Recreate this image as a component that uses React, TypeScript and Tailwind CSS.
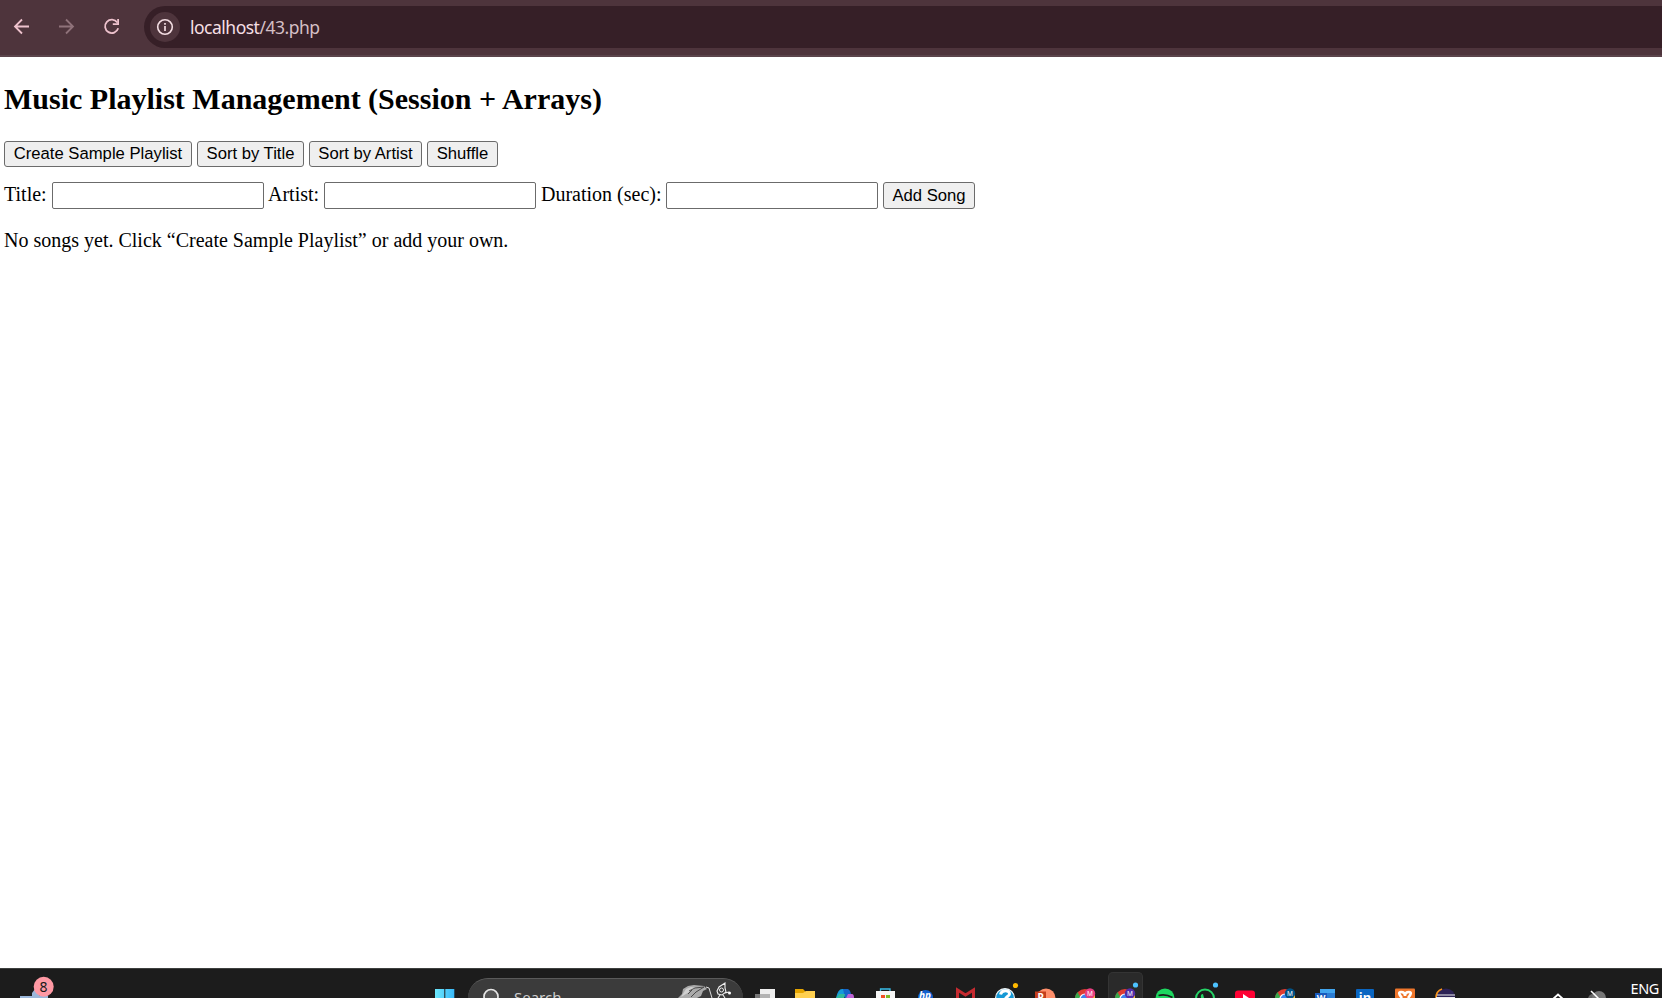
import React from "react";

function NavBar() {
  return (
    <header className="flex h-[57px] w-full shrink-0 items-start border-b-2 border-[#5b444b] bg-[#4e343c] pt-1.5">
      <div className="flex h-[42px] w-[144px] shrink-0 items-center">
        <svg width="144" height="42" viewBox="0 6 144 42" fill="none" strokeWidth="1.8">
          <path d="M29 26.5H15M22 19.5L15 26.5L22 33.5" stroke="#eec2cd" />
          <path d="M59 26.5H73M66 19.5L73 26.5L66 33.5" stroke="#8f727a" />
          <path d="M117.3 22.5A6.7 6.7 0 1 0 118.2 28.3" stroke="#eec2cd" />
          <path d="M118.1 19V24.2H112.8" stroke="#eec2cd" />
        </svg>
      </div>
      <div className="flex h-[42px] flex-1 items-center rounded-l-full bg-[#361f27] pl-1.5">
        <span className="flex size-[30px] items-center justify-center rounded-full bg-[#4e343c]">
          <svg width="18" height="18" viewBox="0 0 18 18" fill="none">
            <circle cx="9" cy="9" r="7.3" stroke="#f3dde2" strokeWidth="1.6" />
            <path d="M9 8V13M9 5V6.7" stroke="#f3dde2" strokeWidth="1.7" />
          </svg>
        </span>
        <span className="ml-[10px] font-['Noto_Sans',sans-serif] text-[17.5px] leading-[24px] tracking-[-0.5px] text-[#f5dfe4]">
          localhost<span className="text-[#d5bfc5]">/43.php</span>
        </span>
      </div>
    </header>
  );
}

function FormButton({ children, className }: { children: React.ReactNode; className: string }) {
  return (
    <button
      className={`shrink-0 whitespace-nowrap rounded-[3px] border border-[#6b6b6b] bg-[#efefef] text-center font-['Liberation_Sans',Arial,sans-serif] text-[16.667px] leading-[22px] text-black ${className}`}
    >
      {children}
    </button>
  );
}

function Field({ label, labelClass }: { label: string; labelClass: string }) {
  return (
    <label className="flex">
      <span className={`shrink-0 whitespace-nowrap leading-[25px] ${labelClass}`}>{label}</span>
      <input className="h-[27px] w-[212px] rounded-[2px] border border-[#6b6b6b] bg-white px-1 text-[16.667px]" />
    </label>
  );
}

function Slot({ children, active }: { children: React.ReactNode; active?: boolean }) {
  return (
    <div
      className={
        active
          ? "h-[26px] w-[35px] shrink-0 rounded-t-[5px] border border-b-0 border-[#343434] bg-[#2a2a2a]"
          : "h-[26px] w-[35px] shrink-0 border border-b-0 border-transparent"
      }
    >
      <svg width="35" height="25" viewBox="0 0 35 25" className="-ml-px block">
        {children}
      </svg>
    </div>
  );
}

function Chrome({ badge }: { badge: string }) {
  return (
    <g>
      <circle cx="17" cy="26" r="10" fill="#df3c32" />
      <path d="M7 26a10 10 0 0 1 2.500-7l4 7z" fill="#38a84d" />
      <path d="M18 20H27V25H18z" fill="#fbc52f" />
      <circle cx="17" cy="26" r="5.6" fill="#fff" />
      <circle cx="17" cy="26" r="4.4" fill="#3f83ee" />
      <circle cx="22" cy="20.500" r="5.2" fill={badge} />
      <text x="22" y="23" textAnchor="middle" fontSize="6.5" fill="#fff" fontFamily="Noto Sans, sans-serif">
        M
      </text>
    </g>
  );
}

function Taskbar() {
  return (
    <footer className="flex h-[30px] w-full shrink-0 items-end overflow-hidden border-t border-[#3d403f] bg-[#1c1c1c]">
      <div className="h-[29px] w-[435px] shrink-0">
        <svg width="80" height="29" viewBox="0 969 80 29">
          <path d="M20 996h12v-3l3-4 5 7h8v3H20z" fill="#9bb7da" />
          <circle cx="43.7" cy="986.7" r="10" fill="#ff99a4" />
          <text x="43.4" y="992" textAnchor="middle" fontSize="14" fill="#1a1a1a" fontFamily="Noto Sans, sans-serif">
            8
          </text>
        </svg>
      </div>
      <svg width="20" height="9" viewBox="0 0 20 9" className="mr-[13px] shrink-0">
        <defs>
          <linearGradient id="win" x1="0" x2="1">
            <stop stopColor="#6de8fc" />
            <stop offset="1" stopColor="#38b8f8" />
          </linearGradient>
        </defs>
        <path d="M0 0H9.3V9H0zM10.3 0H19.3V9H10.3z" fill="url(#win)" />
      </svg>
      <div className="h-5 w-[275px] shrink-0 overflow-hidden rounded-t-[20px] border-t border-[#5a5a5a] bg-[#3b3b3b]">
        <div className="flex h-10 items-start">
          <svg width="17" height="20" viewBox="0 0 17 20" fill="none" className="ml-[15px]">
            <circle cx="8" cy="17.5" r="7" fill="#555" stroke="#e5e5e5" strokeWidth="1.7" />
          </svg>
          <span className="ml-[14px] mt-[8px] w-[161px] font-['Noto_Sans',sans-serif] text-[15px] leading-[20px] text-[#cecece]">
            Search
          </span>
          <svg width="64" height="19" viewBox="675 979 64 19" fill="none">
            <path d="M678 998l4-4 1-5 5-3 6-1 10 1 3 3-4 2-2 5-4 2z" fill="#aaa" />
            <path d="M681 997l5-8 5-2 5 1" fill="#d0d0d0" />
            <path d="M689 991l6-3 9-1-8 5-5 5M688 994l4-4" stroke="#4a4a4a" />
            <path d="M706 987l3 1 3 10" stroke="#ddd" />
            <path d="M717 991l2-4 6-4v5l1 4-4 3-4-1zM718 998l2-3M723 995l2 3M725 993l4-1" stroke="#eee" strokeWidth="1.1" />
            <circle cx="721.500" cy="990" r="2" stroke="#eee" />
            <circle cx="729.500" cy="993" r="1.500" fill="#fff" />
          </svg>
        </div>
      </div>
      <div className="flex w-[720px] shrink-0 items-end gap-[5px] pl-[5px]">
        <Slot>
          <path d="M7 21h15v4H7z" fill="#777" />
          <path d="M12 16h15v9H12z" fill="#eee" />
          <path d="M12 21h10v4H12z" fill="#b3b3b3" />
        </Slot>
        <Slot>
          <path d="M7 16h8l3 3h9v6H7z" fill="#e5a400" />
          <path d="M7 20h8l3-2h9v7H7z" fill="#ffd04f" />
        </Slot>
        <Slot>
          <path d="M8 25q2-9 6-9h6l-4 9z" fill="#1599da" />
          <path d="M15 16h4q3 0 4 5l-5 4h-1z" fill="#1566ca" />
          <path d="M8 25l3-4h6l-1 4z" fill="#31b79b" />
          <path d="M18 25l2-4h4q2 0 2 4z" fill="#bc62d4" />
        </Slot>
        <Slot>
          <path d="M12.500 19v-3h9.500v3" fill="none" stroke="#39bde9" strokeWidth="1.3" />
          <path d="M8 18h19v7H8z" fill="#f6f6f6" />
          <path d="M13 22h4v3h-4z" fill="#f05125" />
          <path d="M18 22h4v3h-4z" fill="#7eba23" />
        </Slot>
        <Slot>
          <circle cx="17.500" cy="24.500" r="7.5" fill="#1261cf" />
          <text x="17" y="26" textAnchor="middle" fontSize="10" fontStyle="italic" fontWeight="bold" fill="#fff" fontFamily="Noto Sans, sans-serif">
            hp
          </text>
        </Slot>
        <Slot>
          <path d="M9.500 25V17l8 5 8-5v8" fill="none" stroke="#c62b30" strokeWidth="3" />
        </Slot>
        <Slot>
          <circle cx="17" cy="25" r="9.4" fill="#1598d5" stroke="#f5f5f5" strokeWidth="1.2" />
          <path d="M12.500 21.500c1-5 9-5 9-.5 0 2-4 3-4 5" fill="none" stroke="#fff" strokeWidth="3" />
          <circle cx="27.5" cy="12.500" r="2.6" fill="#ffb900" />
        </Slot>
        <Slot>
          <circle cx="18" cy="25" r="9.5" fill="#ff8f6b" />
          <path d="M7 18.500h11v7H7z" fill="#c43e1c" />
          <text x="12.5" y="27.500" textAnchor="middle" fontSize="10" fontWeight="bold" fill="#fff" fontFamily="Noto Sans, sans-serif">
            P
          </text>
        </Slot>
        <Slot>
          <Chrome badge="#e83f82" />
        </Slot>
        <Slot active>
          <Chrome badge="#512da8" />
          <circle cx="27.5" cy="12" r="2.6" fill="#4cc2ff" />
        </Slot>
        <Slot>
          <circle cx="17" cy="25" r="9.5" fill="#1ed760" />
          <path d="M10.500 22.500q7-2 14 2" stroke="#1c1c1c" strokeWidth="1.8" fill="none" />
        </Slot>
        <Slot>
          <circle cx="17" cy="25.500" r="9" fill="none" stroke="#25d366" strokeWidth="2" />
          <path d="M13 25q-1-4 2-4l1 4z" fill="#25d366" />
          <circle cx="27.5" cy="12" r="2.6" fill="#4cc2ff" />
        </Slot>
        <Slot>
          <rect x="7" y="17.500" width="20" height="14" rx="3" fill="#ff0033" />
          <path d="M15 21l6 4h-6z" fill="#fff" />
        </Slot>
        <Slot>
          <Chrome badge="#005286" />
        </Slot>
        <Slot>
          <path d="M12 16h15v5H12z" fill="#41a5ee" />
          <path d="M12 20h15v5H12z" fill="#2b7cd3" />
          <path d="M7 20h12v5H7z" fill="#185abd" />
          <text x="13" y="27.500" textAnchor="middle" fontSize="9" fontWeight="bold" fill="#fff" fontFamily="Noto Sans, sans-serif">
            W
          </text>
        </Slot>
        <Slot>
          <rect x="8" y="16" width="18" height="16" rx="1" fill="#0a66c2" />
          <text x="17" y="28.500" textAnchor="middle" fontSize="13" fontWeight="bold" fill="#fff" fontFamily="Noto Sans, sans-serif">
            in
          </text>
        </Slot>
        <Slot>
          <rect x="7" y="15.500" width="20" height="18" rx="1" fill="#ef762b" />
          <path d="M14 25q-5-6-1-6t4 4q0-4 4-4t-1 6" stroke="#fff" strokeWidth="2.6" fill="none" />
        </Slot>
        <Slot>
          <circle cx="18" cy="25" r="9.5" fill="#2c2255" />
          <path d="M8 25q0-7 6-9" stroke="#f7941e" strokeWidth="1.6" fill="none" />
          <path d="M9 22h18M8 24.500h19" stroke="#eee" strokeWidth="1.1" />
        </Slot>
      </div>
      <div className="flex h-[29px] flex-1 items-start justify-end">
        <svg width="76" height="29" viewBox="1550 969 76 29" fill="none">
          <path d="M1551.500 999.500l5.500-5 5.500 5" stroke="#fff" strokeWidth="1.9" />
          <circle cx="1592" cy="999" r="5" fill="#666" />
          <circle cx="1598" cy="998" r="7" fill="#777" />
          <path d="M1590 991l8 8" stroke="#fff" strokeWidth="1.5" />
        </svg>
        <span className="ml-[4px] mr-[3px] mt-[8px] font-['Noto_Sans',sans-serif] text-[14.5px] leading-[22px] tracking-[-0.4px] text-white">
          ENG
        </span>
      </div>
    </footer>
  );
}

export default function App() {
  return (
    <div className="flex h-[998px] w-full flex-col overflow-hidden bg-white">
      <NavBar />
      <main className="flex-1 px-1 font-['Liberation_Serif','Times_New_Roman',serif] text-[20px] text-black">
        <h2 className="mt-[25px] whitespace-nowrap text-[30px] font-bold leading-[34px]">
          Music Playlist Management (Session + Arrays)
        </h2>
        <div className="mt-[25px] flex gap-[5px]">
          <FormButton className="h-[26px] w-[188px]">Create Sample Playlist</FormButton>
          <FormButton className="h-[26px] w-[107px]">Sort by Title</FormButton>
          <FormButton className="h-[26px] w-[113px]">Sort by Artist</FormButton>
          <FormButton className="h-[26px] w-[71px]">Shuffle</FormButton>
        </div>
        <div className="mt-[15px] flex">
          <Field label="Title:" labelClass="w-[48px]" />
          <Field label="Artist:" labelClass="w-[60px] pl-1" />
          <Field label="Duration (sec):" labelClass="w-[130px] pl-[5px]" />
          <FormButton className="ml-[5px] h-[27px] w-[92px]">Add Song</FormButton>
        </div>
        <p className="mt-[20px] leading-[23px]">No songs yet. Click “Create Sample Playlist” or add your own.</p>
      </main>
      <Taskbar />
    </div>
  );
}
